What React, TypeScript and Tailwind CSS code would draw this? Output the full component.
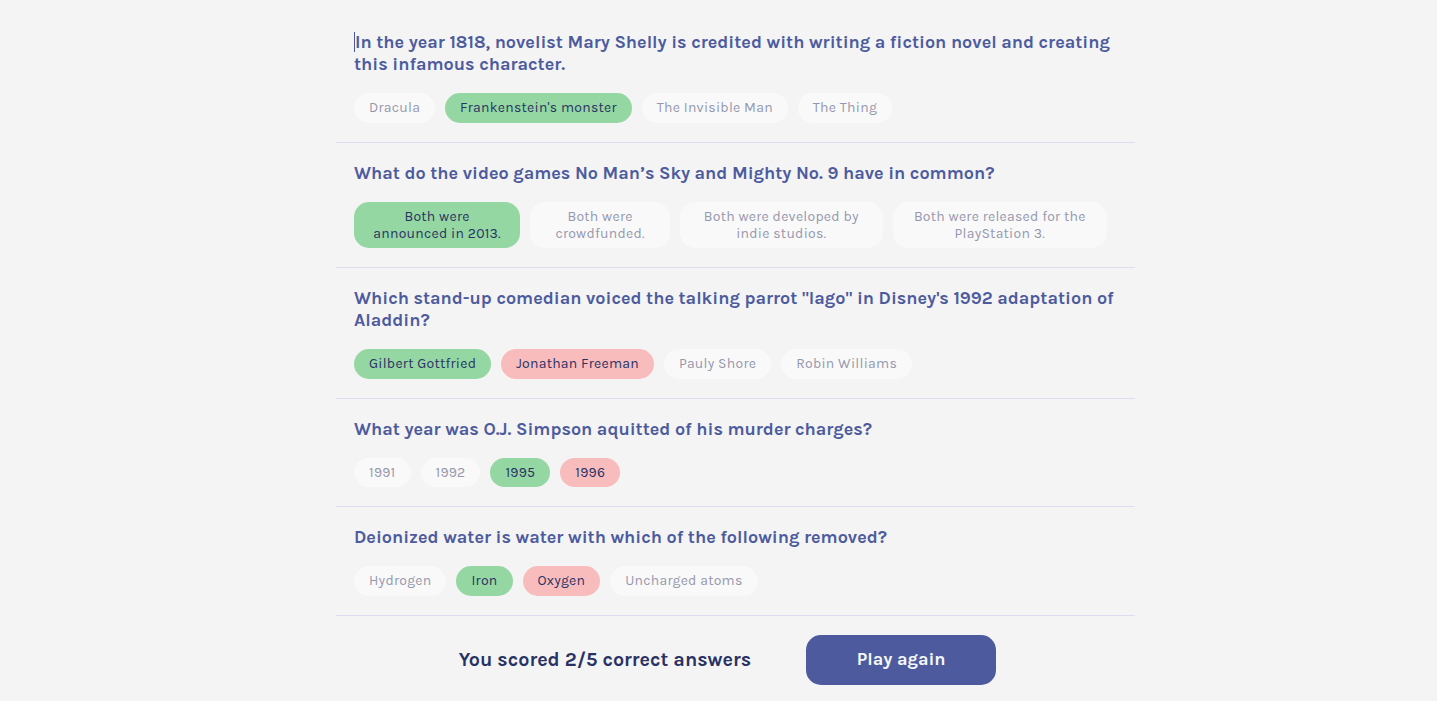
type Answer = { text: string; state?: 'correct' | 'wrong' };

type Question = { question: string; answers: Answer[]; caret?: boolean };

const questions: Question[] = [
    {
        question: 'In the year 1818, novelist Mary Shelly is credited with writing a fiction novel and creating this infamous character.',
        answers: [
            { text: 'Dracula' },
            { text: "Frankenstein's monster", state: 'correct' },
            { text: 'The Invisible Man' },
            { text: 'The Thing' },
        ],
        caret: true,
    },
    {
        question: 'What do the video games No Man\u2019s Sky and Mighty No. 9 have in common?',
        answers: [
            { text: 'Both were announced in 2013.', state: 'correct' },
            { text: 'Both were crowdfunded.' },
            { text: 'Both were developed by indie studios.' },
            { text: 'Both were released for the PlayStation 3.' },
        ],
    },
    {
        question: 'Which stand-up comedian voiced the talking parrot "Iago" in Disney\'s 1992 adaptation of Aladdin?',
        answers: [
            { text: 'Gilbert Gottfried', state: 'correct' },
            { text: 'Jonathan Freeman', state: 'wrong' },
            { text: 'Pauly Shore' },
            { text: 'Robin Williams' },
        ],
    },
    {
        question: 'What year was O.J. Simpson aquitted of his murder charges?',
        answers: [
            { text: '1991' },
            { text: '1992' },
            { text: '1995', state: 'correct' },
            { text: '1996', state: 'wrong' },
        ],
    },
    {
        question: 'Deionized water is water with which of the following removed?',
        answers: [
            { text: 'Hydrogen' },
            { text: 'Iron', state: 'correct' },
            { text: 'Oxygen', state: 'wrong' },
            { text: 'Uncharged atoms' },
        ],
    },
];

function AnswerPill({ answer }: { answer: Answer }) {
    const tone =
        answer.state === 'correct'
            ? 'bg-[#94d7a2] text-[#293264]'
            : answer.state === 'wrong'
              ? 'bg-[#f8bcbc] text-[#293264]'
              : 'bg-[#f9f9fa] text-[#9598ad]';

    return (
        <button className={`min-h-[29.5px] rounded-[15px] px-[15px] py-[6.25px] text-[14px] leading-[17px] tracking-[0.25px] text-center ${tone}`}>
            {answer.text}
        </button>
    );
}

export default function App() {
    return (
        <div className="min-h-[701px] bg-[#f4f4f4] pl-[336px] pt-[12px] font-['Karla','Inter',sans-serif]">
            <div className="w-[799px]">
                {questions.map((q, i) => (
                    <div key={i} className="border-b border-[#dbdef0] px-[18px] pt-[19px] pb-[19px]">
                        <h2 className="text-[18px] font-bold leading-[22px] text-[#4d5b9e]">
                            {q.caret && <span className="inline-block h-[20px] w-[1px] -mb-[4px] bg-[#4d5b9e]" />}
                            {q.question}
                        </h2>
                        <div className="mt-[18px] flex gap-[10px] pr-[10px]">
                            {q.answers.map((a) => (
                                <AnswerPill key={a.text} answer={a} />
                            ))}
                        </div>
                    </div>
                ))}

                {/* Result */}
                <div className="flex items-center justify-center gap-[55px] pt-[19px] pr-[16px]">
                    <span className="text-[19.75px] font-bold text-[#293264]">You scored 2/5 correct answers</span>
                    <button className="h-[50px] w-[190px] rounded-[15px] bg-[#4d5b9e] text-[18px] font-bold text-[#f5f7fb]">
                        Play again
                    </button>
                </div>
            </div>
        </div>
    );
}
